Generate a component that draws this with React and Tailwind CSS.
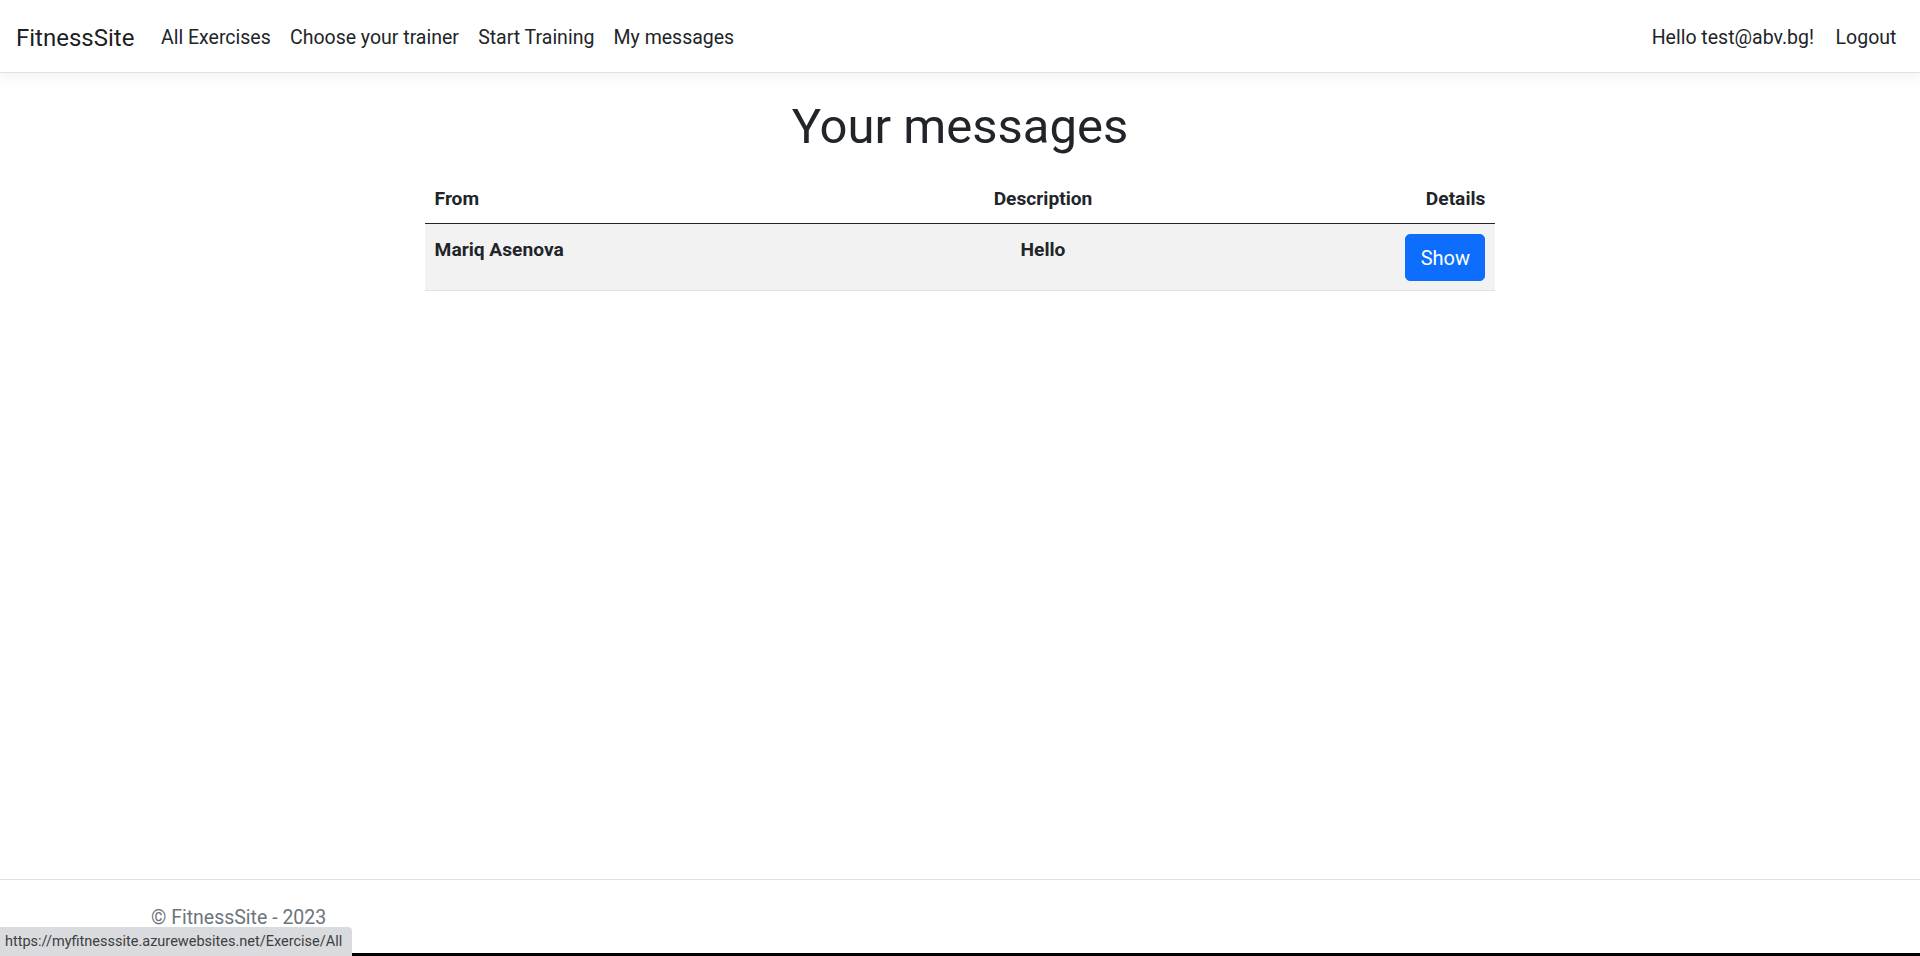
import React from "react";

const NAV_LINKS = ["All Exercises", "Choose your trainer", "Start Training", "My messages"];

const MESSAGES = [{ from: "Mariq Asenova", description: "Hello" }];

export default function App() {
  return (
    <div className="relative flex min-h-screen flex-col bg-white text-[#212529] font-[Roboto,'Liberation_Sans',sans-serif]">
      {/* navbar */}
      <header className="flex h-[73px] items-center justify-between border-b border-[#dee2e6] bg-white px-[14px] pt-[3px] shadow-[0_5px_14px_rgba(0,0,0,0.05)]">
        <div className="flex items-center">
          <a className="mr-[17px] pl-[2px] text-[24px] leading-[1.5] text-black/90">FitnessSite</a>
          <nav className="flex items-center">
            {NAV_LINKS.map((l) => (
              <a key={l} className="px-[9.6px] text-[19.5px] leading-[1.5] text-[#212529]">
                {l}
              </a>
            ))}
          </nav>
        </div>
        <div className="flex items-center">
          <span className="px-[9.6px] text-[19.5px] leading-[1.5] text-[#212529]">Hello test@abv.bg!</span>
          <a className="pl-[12px] pr-[9.6px] text-[19.5px] leading-[1.5] text-[#212529]">Logout</a>
        </div>
      </header>

      {/* content */}
      <main className="flex-1 pt-[25px]">
        <h1 className="mb-[18px] text-center text-[49px] font-normal leading-[1.2]">Your messages</h1>
        <table className="mx-auto w-[1070px] table-fixed border-collapse text-[19.2px] leading-[1.5]">
          <thead>
            <tr className="border-b border-[#212529]">
              <th className="w-[500px] px-[9.6px] pt-[10.5px] pb-[8.7px] text-left font-bold">From</th>
              <th className="w-[236px] px-[9.6px] pt-[10.5px] pb-[8.7px] text-center font-bold">Description</th>
              <th className="w-[334px] px-[9.6px] pt-[10.5px] pb-[8.7px] text-right font-bold">Details</th>
            </tr>
          </thead>
          <tbody>
            {MESSAGES.map((m) => (
              <tr key={m.from} className="border-b border-[#dee2e6] bg-[#f2f2f2]">
                <td className="h-[67px] px-[9.6px] pt-[12.5px] align-top font-bold">{m.from}</td>
                <td className="px-[9.6px] pt-[12.5px] text-center align-top font-bold">{m.description}</td>
                <td className="px-[9.6px] pt-[10.5px] text-right align-top">
                  <button className="rounded-[5px] border border-[#0d6efd] bg-[#0d6efd] px-[14.4px] py-[7.5px] text-[20px] leading-[1.5] text-white">
                    Show
                  </button>
                </td>
              </tr>
            ))}
          </tbody>
        </table>
      </main>

      {/* footer */}
      <footer className="border-t border-[#dee2e6]">
        <div className="h-[73px] pl-[151px] pt-[2px] text-[19.5px] leading-[72px] text-[#6c757d]">© FitnessSite - 2023</div>
        <div className="h-[3px] bg-black" />
      </footer>

      {/* browser status bubble */}
      <div className="absolute bottom-0 left-0 flex h-[29px] w-[352px] items-center rounded-tr-[4px] bg-[#d9dbde] pl-[5px] text-[14.5px] text-[#3c4043]">
        https://myfitnesssite.azurewebsites.net/Exercise/All
      </div>
    </div>
  );
}
